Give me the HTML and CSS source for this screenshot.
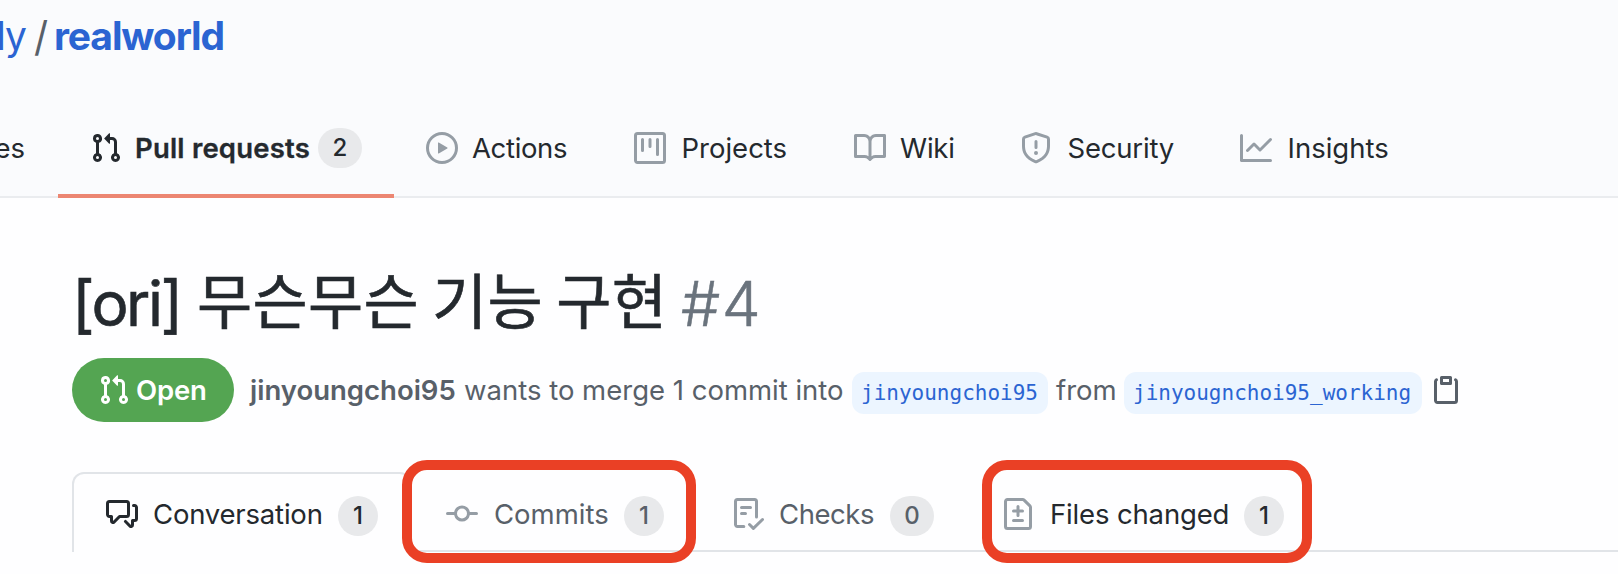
FILE: index.html
```html
<!DOCTYPE html>
<html lang="ko">
<head>
<meta charset="utf-8">
<title>[ori] 무슨무슨 기능 구현 #4</title>
<link rel="stylesheet" href="styles.css">
</head>
<body>
<header class="repo-header">
  <div class="repo-path"><span class="owner">dy</span><span class="slash">/</span><a class="repo-name">realworld</a></div>
  <nav class="repo-nav">
    <a class="nav-item nav-issues">es</a>
    <a class="nav-item nav-pulls selected">
      <svg class="icon" viewBox="0 0 16 16"><path fill-rule="evenodd" d="M7.177 3.073L9.573.677A.25.25 0 0110 .854v4.792a.25.25 0 01-.427.177L7.177 3.427a.25.25 0 010-.354zM3.75 2.5a.75.75 0 100 1.5.75.75 0 000-1.5zm-2.25.75a2.25 2.25 0 113 2.122v5.256a2.251 2.251 0 11-1.5 0V5.372A2.25 2.25 0 011.5 3.25zM11 2.5h-1V4h1a1 1 0 011 1v5.628a2.251 2.251 0 101.5 0V5A2.5 2.5 0 0011 2.5zm1 10.25a.75.75 0 111.5 0 .75.75 0 01-1.5 0zM3.75 12a.75.75 0 100 1.5.75.75 0 000-1.5z"/></svg>
      <span class="label">Pull requests</span><span class="counter wide">2</span>
    </a>
    <a class="nav-item nav-actions">
      <svg class="icon" viewBox="0 0 16 16"><path fill-rule="evenodd" d="M1.5 8a6.5 6.5 0 1113 0 6.5 6.5 0 01-13 0zM8 0a8 8 0 100 16A8 8 0 008 0zM6.379 5.227A.25.25 0 006 5.442v5.117a.25.25 0 00.379.214l4.264-2.559a.25.25 0 000-.428L6.379 5.227z"/></svg>
      <span class="label">Actions</span>
    </a>
    <a class="nav-item nav-projects">
      <svg class="icon" viewBox="0 0 16 16"><path fill-rule="evenodd" d="M1.75 0A1.75 1.75 0 000 1.75v12.5C0 15.216.784 16 1.75 16h12.5A1.75 1.75 0 0016 14.25V1.75A1.75 1.75 0 0014.25 0H1.75zM1.5 1.75a.25.25 0 01.25-.25h12.5a.25.25 0 01.25.25v12.5a.25.25 0 01-.25.25H1.75a.25.25 0 01-.25-.25V1.75zM11.75 3a.75.75 0 00-.75.75v7.5a.75.75 0 001.5 0v-7.5a.75.75 0 00-.75-.75zm-8.25.75a.75.75 0 011.5 0v5.5a.75.75 0 01-1.5 0v-5.5zM8 3a.75.75 0 00-.75.75v3.5a.75.75 0 001.5 0v-3.5A.75.75 0 008 3z"/></svg>
      <span class="label">Projects</span>
    </a>
    <a class="nav-item nav-wiki">
      <svg class="icon" viewBox="0 0 16 16"><path fill-rule="evenodd" d="M0 1.75A.75.75 0 01.75 1h4.253c1.227 0 2.317.59 3 1.501A3.744 3.744 0 0111.006 1h4.245a.75.75 0 01.75.75v10.5a.75.75 0 01-.75.75h-4.507a2.25 2.25 0 00-1.591.659l-.622.621a.75.75 0 01-1.06 0l-.622-.621A2.25 2.25 0 005.258 13H.75a.75.75 0 01-.75-.75V1.75zm8.755 3a2.25 2.25 0 012.25-2.25H14.5v9h-3.757c-.71 0-1.4.201-1.992.572l.004-7.322zm-1.504 7.324l.004-5.073-.002-2.253A2.25 2.25 0 005.003 2.5H1.5v9h3.757a3.75 3.75 0 011.994.574z"/></svg>
      <span class="label">Wiki</span>
    </a>
    <a class="nav-item nav-security">
      <svg class="icon" viewBox="0 0 16 16"><path fill-rule="evenodd" d="M7.467.133a1.75 1.75 0 011.066 0l5.25 1.68A1.75 1.75 0 0115 3.48V7c0 1.566-.32 3.182-1.303 4.682-.983 1.498-2.585 2.813-5.032 3.855a1.7 1.7 0 01-1.33 0c-2.447-1.042-4.049-2.357-5.032-3.855C1.32 10.182 1 8.566 1 7V3.48a1.75 1.75 0 011.217-1.667l5.25-1.68zm.61 1.429a.25.25 0 00-.153 0l-5.25 1.68a.25.25 0 00-.174.238V7c0 1.358.275 2.666 1.057 3.86.784 1.194 2.121 2.34 4.366 3.297a.2.2 0 00.154 0c2.245-.956 3.582-2.104 4.366-3.298C13.225 9.666 13.5 8.36 13.5 7V3.48a.25.25 0 00-.174-.237l-5.25-1.68zM9 10.5a1 1 0 11-2 0 1 1 0 012 0zm-.25-5.75a.75.75 0 10-1.5 0v3a.75.75 0 001.5 0v-3z"/></svg>
      <span class="label">Security</span>
    </a>
    <a class="nav-item nav-insights">
      <svg class="icon" viewBox="0 0 16 16"><path fill-rule="evenodd" d="M1.5 1.75a.75.75 0 00-1.5 0v12.5c0 .414.336.75.75.75h14.5a.75.75 0 000-1.5H1.5V1.75zm14.28 2.53a.75.75 0 00-1.06-1.06L10 7.94 7.53 5.47a.75.75 0 00-1.06 0L3.22 8.72a.75.75 0 001.06 1.06L7 7.06l2.47 2.47a.75.75 0 001.06 0l5.25-5.25z"/></svg>
      <span class="label">Insights</span>
    </a>
  </nav>
</header>
<main class="pull">
  <h1 class="title"><span class="tag">[ori]</span><span class="subject">무슨무슨 기능 구현</span><span class="number">#4</span></h1>
  <div class="meta">
    <span class="state">
      <svg class="icon" viewBox="0 0 16 16"><path fill-rule="evenodd" d="M7.177 3.073L9.573.677A.25.25 0 0110 .854v4.792a.25.25 0 01-.427.177L7.177 3.427a.25.25 0 010-.354zM3.75 2.5a.75.75 0 100 1.5.75.75 0 000-1.5zm-2.25.75a2.25 2.25 0 113 2.122v5.256a2.251 2.251 0 11-1.5 0V5.372A2.25 2.25 0 011.5 3.25zM11 2.5h-1V4h1a1 1 0 011 1v5.628a2.251 2.251 0 101.5 0V5A2.5 2.5 0 0011 2.5zm1 10.25a.75.75 0 111.5 0 .75.75 0 01-1.5 0zM3.75 12a.75.75 0 100 1.5.75.75 0 000-1.5z"/></svg>
      <span>Open</span>
    </span>
    <b class="author">jinyoungchoi95</b>
    <span class="summary">wants to merge 1 commit into</span>
    <code class="branch base">jinyoungchoi95</code>
    <span class="from">from</span>
    <code class="branch head">jinyougnchoi95_working</code>
    <svg class="icon copy" viewBox="0 0 16 16"><path fill-rule="evenodd" d="M5.75 1a.75.75 0 00-.75.75v3c0 .414.336.75.75.75h4.5a.75.75 0 00.75-.75v-3a.75.75 0 00-.75-.75h-4.5zm.75 3V2.5h3V4h-3zm-2.874-.467a.75.75 0 00-.752-1.298A1.75 1.75 0 002 3.75v9.5c0 .966.784 1.75 1.75 1.75h8.5A1.75 1.75 0 0014 13.25v-9.5a1.75 1.75 0 00-.874-1.515.75.75 0 10-.752 1.298.25.25 0 01.126.217v9.5a.25.25 0 01-.25.25h-8.5a.25.25 0 01-.25-.25v-9.5a.25.25 0 01.126-.217z"/></svg>
  </div>
  <div class="tabs">
    <a class="tab tab-conversation active">
      <svg class="icon" viewBox="0 0 16 16"><path fill-rule="evenodd" d="M1.5 2.75a.25.25 0 01.25-.25h8.5a.25.25 0 01.25.25v5.5a.25.25 0 01-.25.25h-3.5a.75.75 0 00-.53.22L3.5 11.44V9.25a.75.75 0 00-.75-.75h-1a.25.25 0 01-.25-.25v-5.5zM1.75 1A1.75 1.75 0 000 2.75v5.5C0 9.216.784 10 1.75 10H2v1.543a1.457 1.457 0 002.487 1.03L7.061 10h3.189A1.75 1.75 0 0012 8.25v-5.5A1.75 1.75 0 0010.25 1h-8.5zM14.5 4.75a.25.25 0 00-.25-.25h-.5a.75.75 0 110-1.5h.5c.966 0 1.75.784 1.75 1.75v5.5A1.75 1.75 0 0114.25 12H14v1.543a1.457 1.457 0 01-2.487 1.03L9.22 12.28a.75.75 0 111.06-1.06l2.22 2.22v-2.19a.75.75 0 01.75-.75h1a.25.25 0 00.25-.25v-5.5z"/></svg>
      <span class="label">Conversation</span><span class="counter">1</span>
    </a>
    <a class="tab tab-commits">
      <svg class="icon" viewBox="0 0 16 16"><path fill-rule="evenodd" d="M10.5 7.75a2.5 2.5 0 11-5 0 2.5 2.5 0 015 0zm1.43.75a4.002 4.002 0 01-7.86 0H.75a.75.75 0 110-1.5h3.32a4.001 4.001 0 017.86 0h3.32a.75.75 0 110 1.5h-3.32z"/></svg>
      <span class="label">Commits</span><span class="counter">1</span>
      <span class="highlight"></span>
    </a>
    <a class="tab tab-checks">
      <svg class="icon" viewBox="0 0 16 16"><path fill-rule="evenodd" d="M2.5 1.75a.25.25 0 01.25-.25h8.5a.25.25 0 01.25.25v7.736a.75.75 0 101.5 0V1.75A1.75 1.75 0 0011.25 0h-8.5A1.75 1.75 0 001 1.75v11.5c0 .966.784 1.75 1.75 1.75h3.17a.75.75 0 000-1.5H2.75a.25.25 0 01-.25-.25V1.75zM4.75 4a.75.75 0 000 1.5h4.5a.75.75 0 000-1.5h-4.5zM4 7.75A.75.75 0 014.75 7h2a.75.75 0 010 1.5h-2A.75.75 0 014 7.75zm11.774 3.537a.75.75 0 00-1.048-1.074L10.7 14.145 9.281 12.72a.75.75 0 00-1.062 1.058l1.943 1.95a.75.75 0 001.055.008l4.557-4.45z"/></svg>
      <span class="label">Checks</span><span class="counter wide">0</span>
    </a>
    <a class="tab tab-files">
      <svg class="icon" viewBox="0 0 16 16"><path fill-rule="evenodd" d="M2.75 1.5a.25.25 0 00-.25.25v12.5c0 .138.112.25.25.25h10.5a.25.25 0 00.25-.25V4.664a.25.25 0 00-.073-.177l-2.914-2.914a.25.25 0 00-.177-.073H2.75zM1 1.75C1 .784 1.784 0 2.75 0h7.586c.464 0 .909.184 1.237.513l2.914 2.914c.329.328.513.773.513 1.237v9.586A1.75 1.75 0 0113.25 16H2.75A1.75 1.75 0 011 14.25V1.75zm7 1.75a.75.75 0 01.75.75v1.5h1.5a.75.75 0 010 1.5h-1.5v1.5a.75.75 0 01-1.5 0v-1.5h-1.5a.75.75 0 010-1.5h1.5v-1.5A.75.75 0 018 3.5zm-3 7.75a.75.75 0 01.75-.75h4.5a.75.75 0 010 1.5h-4.5a.75.75 0 01-.75-.75z"/></svg>
      <span class="label">Files changed</span><span class="counter">1</span>
      <span class="highlight"></span>
    </a>
    <span class="tabs-rest"></span>
  </div>
</main>
</body>
</html>
```
FILE: styles.css
```css
* { box-sizing: border-box; }

body {
  margin: 0;
  min-height: 574px;
  overflow: hidden;
  background: #fefeff;
  color: #24292e;
  font: 27.5px/40px Inter, "Noto Sans CJK KR", sans-serif;
  white-space: nowrap;
}

.icon { width: 32px; height: 32px; flex: none; fill: #959da5; }

/* Repository header */
.repo-header { background: #fafbfd; padding-top: 12px; border-bottom: 2px solid #eaecef; height: 198px; }
.repo-path { display: flex; height: 48px; margin-bottom: 38px; font-size: 39px; line-height: 48px; color: #2b64d2; }
.owner { width: 34px; display: flex; justify-content: flex-end; padding-right: 8px; letter-spacing: -1px; }
.slash { width: 20px; color: #586069; transform: scaleY(1.05); }
.repo-name { font-weight: 700; letter-spacing: -1.1px; }

.repo-nav { display: flex; height: 100px; }
.nav-item { display: flex; align-items: center; flex: none; height: 100px; padding-left: 32px; }
.nav-issues { width: 58px; padding: 0 33px 0 0; justify-content: flex-end; }
.nav-pulls { width: 336px; }
.nav-actions { width: 208px; }
.nav-projects { width: 220px; }
.nav-wiki { width: 166px; }
.nav-security { width: 220px; }
.nav-item .label { margin-left: 15.5px; }
.nav-pulls .label { width: 177px; margin-left: 13px; letter-spacing: 0.2px; font-weight: 600; -webkit-text-stroke: 0.3px; }
.nav-item.nav-actions .label { margin-left: 14px; letter-spacing: -0.35px; }
.nav-wiki .label, .nav-security .label { letter-spacing: -0.2px; }
.nav-item.nav-wiki .label { margin-left: 14px; }
.selected { position: relative; }
.selected .icon { fill: #24292e; }
.selected::after { content: ""; position: absolute; inset: auto 0 0; height: 4px; background: #ec8672; }

.counter {
  display: flex;
  align-items: center;
  justify-content: center;
  flex: none;
  width: 40px;
  height: 40px;
  border-radius: 20px;
  background: #e8e9eb;
  font-size: 24px;
  font-weight: 500;
}
.counter.wide { width: 44px; }
.nav-pulls .counter { margin-left: 6px; }

/* Pull request heading */
.pull { padding: 66px 0 0 72px; }
.title { display: flex; align-items: baseline; height: 80px; margin: 0; font-size: 62px; line-height: 80px; font-weight: 400; }
.tag { width: 125px; letter-spacing: -2.5px; -webkit-text-stroke: 0.6px; }
.subject { width: 484px; margin-bottom: 2px; font: 400 60px/60px "Noto Sans CJK KR", sans-serif; letter-spacing: 0.3px; word-spacing: 4px; word-spacing: -4px; -webkit-text-stroke: 0.6px; transform: translateY(-2px); }
.number { font-weight: 300; color: #6a737d; letter-spacing: 1.5px; -webkit-text-stroke: 0.5px; }

.meta { display: flex; align-items: center; height: 64px; margin-top: 14px; color: #586069; }
.state { display: flex; align-items: center; width: 162px; height: 64px; margin-right: 16px; padding-left: 26px; gap: 6px; border-radius: 32px; background: #54a552; color: #fff; font-weight: 600; letter-spacing: -0.2px; }
.state .icon { fill: #fff; }
.author { width: 214px; font-weight: 600; }
.summary { width: 388px; }
.branch { height: 42px; margin-top: 6px; padding-left: 9px; border-radius: 12px; background: #ecf5ff; color: #2b64d2; font: 21px/42px "DejaVu Sans Mono", monospace; }
.base { width: 196px; }
.from { width: 68px; margin-left: 8px; }
.head { width: 298px; }
.copy { margin-left: 8px; fill: #586069; }

/* Tabs */
.tabs { display: flex; height: 80px; margin-top: 50px; }
.tab { display: flex; align-items: center; flex: none; position: relative; padding: 6px 0 0; border-bottom: 2px solid #e1e4e8; color: #586069; }
.tab .label { margin-left: 14px; }
.tab .counter { margin-top: 4px; }
.tab.active { padding: 2px 0 0 32px; border: 2px solid #e1e4e8; border-bottom: 0; border-radius: 12px 12px 0 0; color: #24292e; }
.active .icon { fill: #24292e; }
.tab-conversation { width: 340px; }
.tab.tab-conversation .label { width: 185px; margin-left: 15px; letter-spacing: -0.2px; }
.tab-commits { width: 286px; padding-left: 34px; }
.tab.tab-commits .label { margin-left: 16px; width: 130px; }
.tab-checks { width: 284px; padding-left: 34px; }
.tab.tab-checks .label { width: 111px; letter-spacing: -0.44px; margin-left: 15px; }
.tab-files { width: 318px; padding-left: 20px; color: #24292e; }
.tab.tab-files .label { margin-left: 16px; width: 194px; letter-spacing: -0.15px; }
.tabs-rest { flex: 1; border-bottom: 2px solid #e1e4e8; }

/* Marker frame drawn over a tab */
.highlight { position: absolute; top: -12px; height: 103px; border: 10px solid #ea4025; border-radius: 25px; z-index: 1; }
.tab-commits .highlight { left: -10px; width: 294px; }
.tab-files .highlight { left: 0; width: 330px; }
```
